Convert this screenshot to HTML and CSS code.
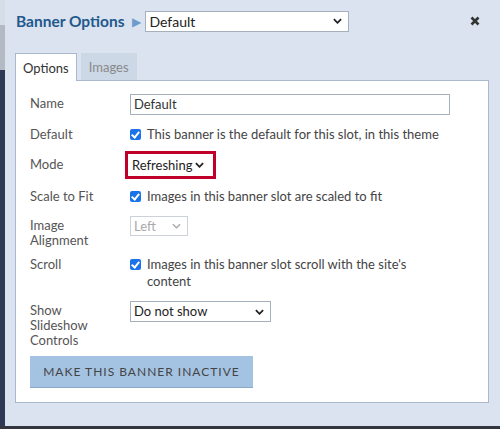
FILE: index.html
```html
<!DOCTYPE html>
<html>
<head>
<meta charset="utf-8">
<link rel="stylesheet" href="styles.css">
</head>
<body>
<div class="screen">
  <div class="backdrop">
    <div class="bd-top"></div>
    <div class="bd-mid"></div>
    <div class="bd-dark"></div>
  </div>
  <div class="modal">
    <div class="title-row">
      <span class="title">Banner Options</span>
      <span class="arrow">&#9654;</span>
      <div class="select title-select"><span>Default</span><svg class="chev" viewBox="0 0 10 6"><path d="M1 1 L5 5 L9 1" fill="none" stroke="#222" stroke-width="2"/></svg></div>
      <span class="close"><svg viewBox="0 0 10 10"><path d="M1.5 1.5 L8.5 8.5 M8.5 1.5 L1.5 8.5" stroke="#333" stroke-width="2.6"/></svg></span>
    </div>
    <div class="tabs">
      <div class="tab active">Options</div>
      <div class="tab">Images</div>
    </div>
    <div class="panel">
      <div class="row r-name">
        <div class="label">Name</div>
        <div class="ctrl"><div class="input">Default</div></div>
      </div>
      <div class="row r-default">
        <div class="label">Default</div>
        <div class="ctrl check"><span class="box"></span><span>This banner is the default for this slot, in this theme</span></div>
      </div>
      <div class="row r-mode">
        <div class="label">Mode</div>
        <div class="ctrl"><div class="mode-select"><span>Refreshing</span><svg class="chev" viewBox="0 0 10 6"><path d="M1 1 L5 5 L9 1" fill="none" stroke="#222" stroke-width="2"/></svg></div></div>
      </div>
      <div class="row r-scale">
        <div class="label">Scale to Fit</div>
        <div class="ctrl check"><span class="box"></span><span>Images in this banner slot are scaled to fit</span></div>
      </div>
      <div class="row r-align">
        <div class="label">Image<br>Alignment</div>
        <div class="ctrl"><div class="select disabled"><span>Left</span><svg class="chev" viewBox="0 0 10 6"><path d="M1 1 L5 5 L9 1" fill="none" stroke="#aaa" stroke-width="1.6"/></svg></div></div>
      </div>
      <div class="row r-scroll">
        <div class="label">Scroll</div>
        <div class="ctrl check"><span class="box"></span><span>Images in this banner slot scroll with the site's content</span></div>
      </div>
      <div class="row r-show">
        <div class="label">Show<br>Slideshow<br>Controls</div>
        <div class="ctrl"><div class="select show-select"><span>Do not show</span><svg class="chev" viewBox="0 0 10 6"><path d="M1 1 L5 5 L9 1" fill="none" stroke="#222" stroke-width="2"/></svg></div></div>
      </div>
      <div class="btn">MAKE THIS BANNER INACTIVE</div>
    </div>
  </div>
</div>
<div class="bottom-strip"></div>
</body>
</html>
```
FILE: styles.css
```css
html, body {
  margin: 0;
  padding: 0;
  width: 500px;
  height: 429px;
  overflow: hidden;
  font-family: Lato, "Open Sans", sans-serif;
}
.screen {
  display: flex;
  height: 426px;
}
.backdrop {
  width: 5px;
  display: flex;
  flex-direction: column;
}
.bd-top {
  height: 25px;
  background: #d5dde8;
}
.bd-mid {
  height: 45px;
  background: #b4bac4;
}
.bd-dark {
  flex: 1;
  background: #2f3956;
}
.bottom-strip {
  height: 3px;
  background: #33363f;
}
.modal {
  flex: 1;
  background: #dae3ef;
  padding: 11px 11px 23px 10px;
  display: flex;
  flex-direction: column;
}
.title-row {
  display: flex;
  align-items: center;
  height: 20px;
  padding-left: 1px;
}
.title {
  font-weight: bold;
  font-size: 15.5px;
  color: #22598c;
}
.arrow {
  color: #6d9ccc;
  font-size: 12px;
  margin: 0 4px 0 8px;
}
.select {
  background: #fff;
  border: 1px solid #a5b0bc;
  display: flex;
  align-items: center;
  justify-content: space-between;
  box-sizing: border-box;
  padding: 0 6px 0 3px;
  font-size: 13px;
  color: #222;
}
.title-select {
  width: 204px;
  height: 21px;
  font-size: 14px;
}
.chev {
  width: 9px;
  height: 6px;
}
.close {
  margin-left: auto;
  margin-right: 9px;
  width: 10px;
  height: 10px;
  display: flex;
}
.close svg {
  width: 10px;
  height: 10px;
}
.tabs {
  display: flex;
  margin-top: 22px;
  gap: 4px;
  position: relative;
  z-index: 1;
}
.tab {
  height: 27px;
  box-sizing: border-box;
  padding: 6px 8px 0;
  font-size: 13px;
  color: #888;
  background: #cdd8e6;
}
.tab.active {
  background: #fff;
  color: #333;
  border: 1px solid #a9b8cc;
  border-bottom: none;
  height: 28px;
  padding: 6px 7px 0;
  margin-bottom: -1px;
}
.panel {
  flex: 1;
  background: #fff;
  border: 1px solid #a9b8cc;
  padding: 13px 15px 0 14px;
  display: flex;
  flex-direction: column;
}
.row {
  display: flex;
  font-size: 13px;
  line-height: 15px;
  color: #555;
}
.label {
  width: 100px;
  flex-shrink: 0;
  padding-top: 2px;
}
.ctrl {
  max-width: 320px;
  flex: 1;
}
.r-name { margin-bottom: 10px; }
.r-default { margin-bottom: 8px; }
.r-mode { margin-bottom: 8px; }
.r-scale { margin-bottom: 11px; }
.r-align { margin-bottom: 7px; }
.r-scroll { margin-bottom: 11px; }
.r-show { margin-bottom: 8px; }
.input {
  width: 320px;
  height: 21px;
  box-sizing: border-box;
  border: 1px solid #a5b0bc;
  padding: 2px 3px;
  color: #333;
}
.check {
  display: flex;
  gap: 6px;
  color: #444;
  padding-top: 1px;
  line-height: 17px;
}
.box {
  width: 11px;
  height: 11px;
  flex-shrink: 0;
  margin-top: 3px;
  border-radius: 2px;
  background: #1a73e8;
  position: relative;
}
.box::after {
  content: "";
  position: absolute;
  left: 3px;
  top: 1px;
  width: 3px;
  height: 6px;
  border: solid #fff;
  border-width: 0 2px 2px 0;
  transform: rotate(40deg);
}
.r-mode .label {
  padding-top: 6px;
}
.mode-select {
  margin-left: -5px;
  width: 91px;
  height: 28px;
  box-sizing: border-box;
  border: 3px solid #c0002a;
  display: flex;
  align-items: center;
  gap: 3px;
  padding-left: 4px;
  font-size: 13px;
  color: #222;
}
.disabled {
  width: 58px;
  height: 20px;
  color: #aaa;
  border-color: #ccd2d8;
}
.show-select {
  width: 141px;
  height: 21px;
}
.btn {
  width: 223px;
  height: 32px;
  box-sizing: border-box;
  background: #a4c3e2;
  border-bottom: 1px solid #8ca9c6;
  display: flex;
  align-items: center;
  justify-content: center;
  font-size: 12px;
  letter-spacing: 1px;
  color: #444;
}
```
